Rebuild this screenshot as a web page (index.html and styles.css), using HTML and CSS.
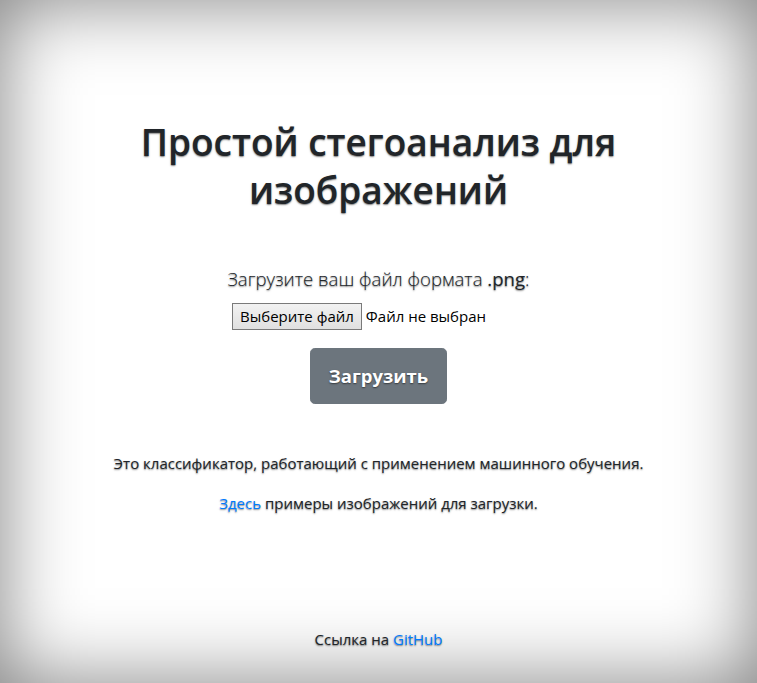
FILE: index.html
```html
<!DOCTYPE html>
<html lang="ru">
<head>
<meta charset="utf-8">
<title>Простой стегоанализ для изображений</title>
<link rel="stylesheet" href="styles.css">
</head>
<body>
<div class="cover">
  <main class="inner">
    <h1 class="title">Простой стегоанализ для изображений</h1>
    <form class="upload">
      <p class="lead">Загрузите ваш файл формата <span class="ext">.png</span>:</p>
      <div class="file">
        <span class="file-btn">Выберите файл</span>
        <span class="file-name">Файл не выбран</span>
      </div>
      <button type="button" class="btn">Загрузить</button>
    </form>
    <p class="text">Это классификатор, работающий с применением машинного обучения.</p>
    <p class="text"><a href="#">Здесь</a> примеры изображений для загрузки.</p>
  </main>
  <footer class="foot">
    <p class="text">Ссылка на <a href="#">GitHub</a></p>
  </footer>
</div>
</body>
</html>
```
FILE: styles.css
```css
html, body {
  height: 100%;
  margin: 0;
}
body {
  background: #fff;
  box-shadow: inset 0 0 5rem rgba(0, 0, 0, 0.5);
  color: #212529;
  font-family: "Open Sans", "Noto Sans", sans-serif;
  font-size: 15px;
  line-height: 24px;
  text-align: center;
  text-shadow: 0 0.05rem 0.1rem rgba(0, 0, 0, 0.5);
}
.cover {
  box-sizing: border-box;
  height: 100%;
  max-width: 42em;
  margin: 0 auto;
  padding: 16px;
  display: flex;
  flex-direction: column;
}
.inner {
  margin: auto 0;
  padding-top: 5px;
}
.title {
  font-size: 37px;
  font-weight: 600;
  line-height: 48px;
  margin: 0 0 8px;
}
.upload {
  margin: 50px 0 47px;
  display: flex;
  flex-direction: column;
  align-items: center;
}
.lead {
  font-size: 18.6px;
  font-weight: 300;
  line-height: 30px;
  margin: 0 0 9px;
}
.ext {
  font-weight: 400;
}
.file {
  width: 293px;
  display: flex;
  align-items: center;
  justify-content: flex-start;
  gap: 4px;
  margin-bottom: 18px;
}
.file-btn {
  box-sizing: border-box;
  height: 27px;
  line-height: 25px;
  padding: 0 7px;
  border: 1px solid #7a7a7a;
  background: linear-gradient(#f2f2f2, #e0e0e0);
  color: #000;
  text-shadow: none;
}
.file-name {
  color: #000;
  text-shadow: none;
}
.btn {
  font-family: inherit;
  font-size: 18.5px;
  font-weight: 700;
  line-height: 30px;
  padding: 12px 18px;
  color: #fff;
  background: #6c757d;
  border: 1px solid #6c757d;
  border-radius: 4.8px;
  text-shadow: 0 0.05rem 0.1rem rgba(0, 0, 0, 0.5);
}
.text {
  margin: 0 0 16px;
}
a {
  color: #007bff;
  text-decoration: none;
}
```
